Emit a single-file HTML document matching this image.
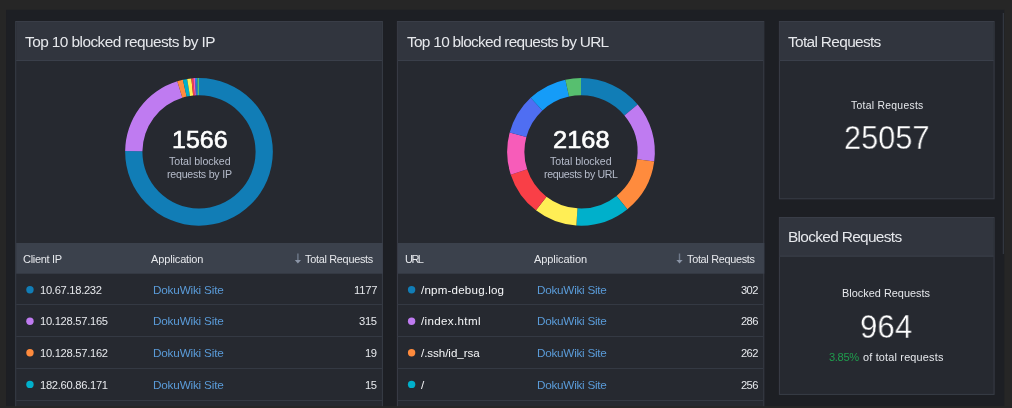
<!DOCTYPE html>
<html lang="en"><head><meta charset="utf-8"><title>Dashboard</title>
<style>
html,body{margin:0;padding:0;background:#262626;}
body{width:1012px;height:408px;position:relative;overflow:hidden;font-family:"Liberation Sans", sans-serif;}
.t{position:absolute;white-space:nowrap;will-change:transform;}
#txt{position:absolute;left:0;top:0;width:1012px;height:408px;}
</style></head><body>
<svg width="1012" height="408" viewBox="0 0 1012 408" style="position:absolute;left:0;top:0">
<rect x="6.1" y="9.8" width="998.2" height="396.4" fill="#1d1f24" />
<rect x="1002.8" y="13" width="1.0" height="241" fill="#383d47" />
<rect x="15.2" y="21" width="367.7" height="400" fill="#393d47" />
<rect x="16.2" y="22" width="365.7" height="398" fill="#262930" />
<rect x="16.2" y="22" width="365.7" height="39" fill="#31353e" />
<rect x="16.2" y="60" width="365.7" height="1" fill="#3a3f4a" />
<rect x="396.9" y="21" width="367.4" height="400" fill="#393d47" />
<rect x="397.9" y="22" width="365.4" height="398" fill="#262930" />
<rect x="397.9" y="22" width="365.4" height="39" fill="#31353e" />
<rect x="397.9" y="60" width="365.4" height="1" fill="#3a3f4a" />
<rect x="778.9" y="21" width="215.7" height="178.3" fill="#393d47" />
<rect x="779.9" y="22" width="213.7" height="176.3" fill="#262930" />
<rect x="779.9" y="22" width="213.7" height="39" fill="#31353e" />
<rect x="779.9" y="60" width="213.7" height="1" fill="#3a3f4a" />
<rect x="778.9" y="217" width="215.7" height="177.9" fill="#393d47" />
<rect x="779.9" y="218" width="213.7" height="175.9" fill="#262930" />
<rect x="779.9" y="218" width="213.7" height="38.6" fill="#31353e" />
<rect x="779.9" y="255.60000000000002" width="213.7" height="1" fill="#3a3f4a" />
<rect x="16.2" y="243" width="366.7" height="30.7" fill="#3b414c" />
<rect x="16.2" y="304" width="365.7" height="1" fill="#343943" />
<rect x="16.2" y="336" width="365.7" height="1" fill="#343943" />
<rect x="16.2" y="368" width="365.7" height="1" fill="#343943" />
<rect x="16.2" y="400" width="365.7" height="1" fill="#343943" />
<rect x="397.9" y="243" width="366.4" height="30.7" fill="#3b414c" />
<rect x="397.9" y="304" width="365.4" height="1" fill="#343943" />
<rect x="397.9" y="336" width="365.4" height="1" fill="#343943" />
<rect x="397.9" y="368" width="365.4" height="1" fill="#343943" />
<rect x="397.9" y="400" width="365.4" height="1" fill="#343943" />
<path d="M199.00 78.00A73.85 73.85 0 1 1 125.15 151.08L142.40 151.26A56.6 56.6 0 1 0 199.00 95.25Z" fill="#117db6"/>
<path d="M125.15 151.08A73.85 73.85 0 0 1 177.29 81.26L182.36 97.75A56.6 56.6 0 0 0 142.40 151.26Z" fill="#bf7bf1"/>
<path d="M177.29 81.26A73.85 73.85 0 0 1 182.89 79.78L186.65 96.61A56.6 56.6 0 0 0 182.36 97.75Z" fill="#ff8b3d"/>
<path d="M182.89 79.78A73.85 73.85 0 0 1 187.19 78.95L189.95 95.98A56.6 56.6 0 0 0 186.65 96.61Z" fill="#00b0cb"/>
<path d="M187.19 78.95A73.85 73.85 0 0 1 191.36 78.40L193.14 95.55A56.6 56.6 0 0 0 189.95 95.98Z" fill="#ffee55"/>
<path d="M191.36 78.40A73.85 73.85 0 0 1 193.21 78.23L194.56 95.42A56.6 56.6 0 0 0 193.14 95.55Z" fill="#f93f47"/>
<path d="M193.21 78.23A73.85 73.85 0 0 1 195.01 78.11L195.94 95.33A56.6 56.6 0 0 0 194.56 95.42Z" fill="#f75cb9"/>
<path d="M195.01 78.11A73.85 73.85 0 0 1 196.10 78.06L196.78 95.29A56.6 56.6 0 0 0 195.94 95.33Z" fill="#4f6ef2"/>
<path d="M196.10 78.06A73.85 73.85 0 0 1 197.50 78.02L197.85 95.26A56.6 56.6 0 0 0 196.78 95.29Z" fill="#159cf8"/>
<path d="M197.50 78.02A73.85 73.85 0 0 1 199.00 78.00L199.00 95.25A56.6 56.6 0 0 0 197.85 95.26Z" fill="#57bf6f"/>
<path d="M581.00 78.00A73.85 73.85 0 0 1 637.66 104.48L624.42 115.54A56.6 56.6 0 0 0 581.00 95.25Z" fill="#117db6"/>
<path d="M637.66 104.48A73.85 73.85 0 0 1 654.20 161.62L637.10 159.34A56.6 56.6 0 0 0 624.42 115.54Z" fill="#bf7bf1"/>
<path d="M654.20 161.62A73.85 73.85 0 0 1 627.38 209.32L616.54 195.90A56.6 56.6 0 0 0 637.10 159.34Z" fill="#ff8b3d"/>
<path d="M627.38 209.32A73.85 73.85 0 0 1 576.36 225.55L577.45 208.34A56.6 56.6 0 0 0 616.54 195.90Z" fill="#00b0cb"/>
<path d="M576.36 225.55A73.85 73.85 0 0 1 535.94 210.36L546.47 196.69A56.6 56.6 0 0 0 577.45 208.34Z" fill="#ffee55"/>
<path d="M535.94 210.36A73.85 73.85 0 0 1 510.76 174.67L527.17 169.34A56.6 56.6 0 0 0 546.47 196.69Z" fill="#f93f47"/>
<path d="M510.76 174.67A73.85 73.85 0 0 1 509.70 132.61L526.35 137.11A56.6 56.6 0 0 0 527.17 169.34Z" fill="#f75cb9"/>
<path d="M509.70 132.61A73.85 73.85 0 0 1 530.63 97.84L542.40 110.46A56.6 56.6 0 0 0 526.35 137.11Z" fill="#4f6ef2"/>
<path d="M530.63 97.84A73.85 73.85 0 0 1 565.39 79.67L569.04 96.53A56.6 56.6 0 0 0 542.40 110.46Z" fill="#159cf8"/>
<path d="M565.39 79.67A73.85 73.85 0 0 1 581.00 78.00L581.00 95.25A56.6 56.6 0 0 0 569.04 96.53Z" fill="#57bf6f"/>
<circle cx="29.95" cy="289.7" r="3.7" fill="#117db6"/>
<circle cx="411.6" cy="289.7" r="3.7" fill="#117db6"/>
<circle cx="29.95" cy="321.3" r="3.7" fill="#bf7bf1"/>
<circle cx="411.6" cy="321.3" r="3.7" fill="#bf7bf1"/>
<circle cx="29.95" cy="352.8" r="3.7" fill="#ff8b3d"/>
<circle cx="411.6" cy="352.8" r="3.7" fill="#ff8b3d"/>
<circle cx="29.95" cy="384.4" r="3.7" fill="#00b0cb"/>
<circle cx="411.6" cy="384.4" r="3.7" fill="#00b0cb"/>
<path d="M297.9 253.5V260.5" stroke="#6f798a" stroke-width="1.4" fill="none"/><path d="M294.79999999999995 260.1H301.0L297.9 263.6Z" fill="#8b95a7"/>
<path d="M679.5 253.5V260.5" stroke="#6f798a" stroke-width="1.4" fill="none"/><path d="M676.4 260.1H682.6L679.5 263.6Z" fill="#8b95a7"/>
<rect x="0" y="406.2" width="1012" height="2" fill="#262626" />
</svg>
<div id="txt">
<div class="t" style="left:25.40px;top:31.00px;font-size:15.43px;line-height:21px;letter-spacing:-0.576px;color:#e6e8ec;">Top 10 blocked requests by IP</div>
<div class="t" style="left:407.40px;top:31.00px;font-size:15.43px;line-height:21px;letter-spacing:-0.714px;color:#e6e8ec;">Top 10 blocked requests by URL</div>
<div class="t" style="left:788.00px;top:31.00px;font-size:15.43px;line-height:21px;letter-spacing:-0.669px;color:#e6e8ec;">Total Requests</div>
<div class="t" style="left:788.20px;top:226.00px;font-size:15.43px;line-height:21px;letter-spacing:-0.679px;color:#e6e8ec;">Blocked Requests</div>
<div class="t" style="left:171.73px;top:125.20px;font-size:23.29px;line-height:31px;color:#ffffff;-webkit-text-stroke:0.6px #ffffff;transform-origin:0 50%;transform:scaleX(1.0734)">1566</div>
<div class="t" style="left:168.60px;top:154.00px;font-size:10.61px;line-height:14px;letter-spacing:-0.027px;color:#b6bccb;">Total blocked</div>
<div class="t" style="left:166.60px;top:167.00px;font-size:10.61px;line-height:14px;letter-spacing:-0.218px;color:#b6bccb;">requests by IP</div>
<div class="t" style="left:552.61px;top:125.20px;font-size:23.29px;line-height:31px;color:#ffffff;-webkit-text-stroke:0.6px #ffffff;transform-origin:0 50%;transform:scaleX(1.0914)">2168</div>
<div class="t" style="left:550.00px;top:154.00px;font-size:10.61px;line-height:14px;letter-spacing:-0.027px;color:#b6bccb;">Total blocked</div>
<div class="t" style="left:543.60px;top:167.00px;font-size:10.61px;line-height:14px;letter-spacing:-0.365px;color:#b6bccb;">requests by URL</div>
<div class="t" style="left:850.50px;top:99.00px;font-size:10.34px;line-height:14px;letter-spacing:0.304px;color:#e6e8ec;">Total Requests</div>
<div class="t" style="left:843.60px;top:114.90px;font-size:34.14px;line-height:45px;color:#ffffff;-webkit-text-stroke:0.4px #262930;transform-origin:0 50%;transform:scaleX(0.8997)">25057</div>
<div class="t" style="left:842.40px;top:286.00px;font-size:10.89px;line-height:15px;letter-spacing:0.026px;color:#e6e8ec;">Blocked Requests</div>
<div class="t" style="left:860.36px;top:305.00px;font-size:33.43px;line-height:44px;color:#ffffff;-webkit-text-stroke:0.4px #262930;transform-origin:0 50%;transform:scaleX(0.9359)">964</div>
<div class="t" style="left:829.10px;top:350.00px;font-size:11.14px;line-height:15px;letter-spacing:-0.363px;color:#1f9d4d;">3.85%</div>
<div class="t" style="left:862.90px;top:350.00px;font-size:10.89px;line-height:15px;letter-spacing:0.185px;color:#e6e8ec;">of total requests</div>
<div class="t" style="left:23.30px;top:252.00px;font-size:11.03px;line-height:15px;letter-spacing:-0.323px;color:#e6e8ec;">Client IP</div>
<div class="t" style="left:151.00px;top:252.00px;font-size:11.03px;line-height:15px;letter-spacing:-0.146px;color:#e6e8ec;">Application</div>
<div class="t" style="left:305.30px;top:252.00px;font-size:10.89px;line-height:15px;letter-spacing:-0.284px;color:#e6e8ec;">Total Requests</div>
<div class="t" style="left:404.70px;top:252.00px;font-size:11.03px;line-height:15px;letter-spacing:-1.555px;color:#e6e8ec;">URL</div>
<div class="t" style="left:534.20px;top:252.00px;font-size:11.03px;line-height:15px;letter-spacing:-0.076px;color:#e6e8ec;">Application</div>
<div class="t" style="left:686.90px;top:252.00px;font-size:10.89px;line-height:15px;letter-spacing:-0.300px;color:#e6e8ec;">Total Requests</div>
<div class="t" style="left:40.15px;top:283.00px;font-size:11.2px;line-height:15px;letter-spacing:-0.301px;color:#e6e8ec;">10.67.18.232</div>
<div class="t" style="left:152.70px;top:282.00px;font-size:11.73px;line-height:16px;letter-spacing:-0.180px;color:#5a9bd8;">DokuWiki Site</div>
<div class="t" style="left:353.70px;top:283.00px;font-size:11.2px;line-height:15px;letter-spacing:-0.178px;color:#e6e8ec;">1177</div>
<div class="t" style="left:420.80px;top:282.00px;font-size:11.59px;line-height:16px;letter-spacing:0.198px;color:#f6f7f9;">/npm-debug.log</div>
<div class="t" style="left:536.60px;top:282.00px;font-size:11.73px;line-height:16px;letter-spacing:-0.258px;color:#5a9bd8;">DokuWiki Site</div>
<div class="t" style="left:741.00px;top:283.00px;font-size:11.2px;line-height:15px;letter-spacing:-0.622px;color:#e6e8ec;">302</div>
<div class="t" style="left:40.15px;top:314.00px;font-size:11.2px;line-height:15px;letter-spacing:-0.291px;color:#e6e8ec;">10.128.57.165</div>
<div class="t" style="left:152.70px;top:313.00px;font-size:11.73px;line-height:16px;letter-spacing:-0.180px;color:#5a9bd8;">DokuWiki Site</div>
<div class="t" style="left:359.20px;top:314.00px;font-size:11.2px;line-height:15px;letter-spacing:-0.322px;color:#e6e8ec;">315</div>
<div class="t" style="left:420.80px;top:313.00px;font-size:11.59px;line-height:16px;letter-spacing:0.349px;color:#f6f7f9;">/index.html</div>
<div class="t" style="left:536.60px;top:313.00px;font-size:11.73px;line-height:16px;letter-spacing:-0.258px;color:#5a9bd8;">DokuWiki Site</div>
<div class="t" style="left:741.00px;top:314.00px;font-size:11.2px;line-height:15px;letter-spacing:-0.622px;color:#e6e8ec;">286</div>
<div class="t" style="left:40.15px;top:346.00px;font-size:11.2px;line-height:15px;letter-spacing:-0.291px;color:#e6e8ec;">10.128.57.162</div>
<div class="t" style="left:152.70px;top:345.00px;font-size:11.73px;line-height:16px;letter-spacing:-0.180px;color:#5a9bd8;">DokuWiki Site</div>
<div class="t" style="left:365.30px;top:346.00px;font-size:11.2px;line-height:15px;letter-spacing:-0.522px;color:#e6e8ec;">19</div>
<div class="t" style="left:420.80px;top:345.00px;font-size:11.59px;line-height:16px;letter-spacing:-0.051px;color:#f6f7f9;">/.ssh/id_rsa</div>
<div class="t" style="left:536.60px;top:345.00px;font-size:11.73px;line-height:16px;letter-spacing:-0.258px;color:#5a9bd8;">DokuWiki Site</div>
<div class="t" style="left:741.00px;top:346.00px;font-size:11.2px;line-height:15px;letter-spacing:-0.622px;color:#e6e8ec;">262</div>
<div class="t" style="left:40.15px;top:378.00px;font-size:11.2px;line-height:15px;letter-spacing:-0.291px;color:#e6e8ec;">182.60.86.171</div>
<div class="t" style="left:152.70px;top:377.00px;font-size:11.73px;line-height:16px;letter-spacing:-0.180px;color:#5a9bd8;">DokuWiki Site</div>
<div class="t" style="left:365.30px;top:378.00px;font-size:11.2px;line-height:15px;letter-spacing:-0.522px;color:#e6e8ec;">15</div>
<div class="t" style="left:420.80px;top:377.00px;font-size:11.59px;line-height:16px;letter-spacing:0.500px;color:#f6f7f9;">/</div>
<div class="t" style="left:536.60px;top:377.00px;font-size:11.73px;line-height:16px;letter-spacing:-0.258px;color:#5a9bd8;">DokuWiki Site</div>
<div class="t" style="left:741.00px;top:378.00px;font-size:11.2px;line-height:15px;letter-spacing:-0.622px;color:#e6e8ec;">256</div>
</div>
</body></html>
